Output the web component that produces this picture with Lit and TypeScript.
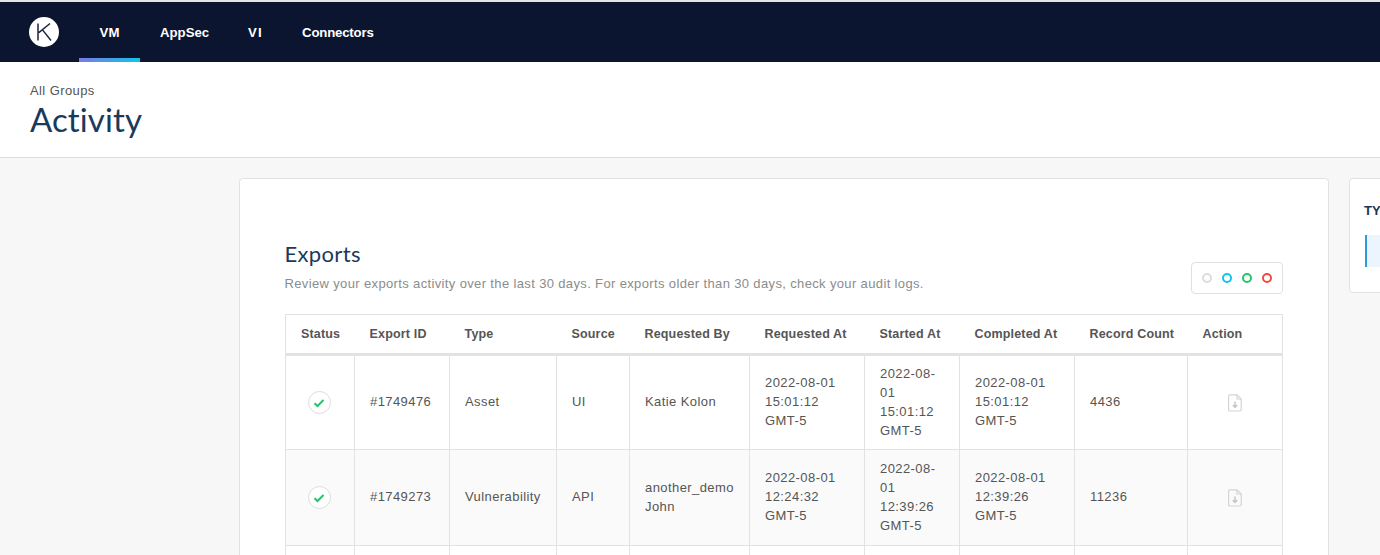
import { LitElement, html, css, svg } from "lit";
import { customElement } from "lit/decorators.js";

const check = html`<span class="ok"><svg width="12" height="10" viewBox="0 0 12 10"><path d="M1.5 5.2 4.5 8 10.5 2" fill="none" stroke="#22c56e" stroke-width="2"/></svg></span>`;
const fileIcon = html`<svg class="file" width="14" height="18" viewBox="0 0 14 18" fill="none" stroke="#d4d4d4" stroke-width="1.2"><path d="M1.8.8H9L13.2 5V15.6a1.4 1.4 0 0 1-1.4 1.4H1.8A1.4 1.4 0 0 1 .6 15.6V2.2A1.4 1.4 0 0 1 1.8.8Z"/><path d="M9 1V5H13"/><path d="M7 7.5V13M4.8 11 7 13.4 9.2 11" stroke="#c4c4c4" stroke-width="1.4"/></svg>`;

const columns = [
  ["Status", 69], ["Export ID", 95], ["Type", 107], ["Source", 73], ["Requested By", 120],
  ["Requested At", 115], ["Started At", 95], ["Completed At", 115], ["Record Count", 113], ["Action", 95],
] as const;

const rows = [
  { id: "#1749476", type: "Asset", source: "UI", by: ["Katie Kolon"], req: "15:01:12", start: "15:01:12", done: "15:01:12", count: "4436" },
  { id: "#1749273", type: "Vulnerability", source: "API", by: ["another_demo", "John"], req: "12:24:32", start: "12:39:26", done: "12:39:26", count: "11236" },
];

@customElement("app-root")
export class AppRoot extends LitElement {
  static styles = css`
    :host { display: block; width: 1380px; height: 555px; overflow: hidden; background: #f7f7f7; font-family: "Liberation Sans", Arial, sans-serif; color: #555; }
    * { box-sizing: border-box; }
    .top { height: 62px; border-top: 2px solid #e4e4e4; background: #0b1530; display: flex; padding-left: 29px; }
    .logo { width: 30px; height: 30px; margin: 15px 20px 0 0; border-radius: 50%; background: #fff; display: flex; align-items: center; justify-content: center; }
    .tab { height: 60px; padding: 0 20px; display: flex; align-items: center; justify-content: center; color: #fff; font-size: 13.2px; font-weight: 700; position: relative; }
    .tab.active { width: 61px; padding: 0; }
    .tab.wide { margin-left: -1px; letter-spacing: 1px; }
    .tab:last-child { margin-left: -.5px; letter-spacing: -.18px; }
    .tab.active::after { content: ""; position: absolute; left: 0; right: 0; bottom: 0; height: 4px; background: linear-gradient(90deg, #7b78e6, #0fc6e6); }
    .head { height: 96px; background: #fff; border-bottom: 1px solid #ddd; padding: 21px 30px 0; }
    .crumb { font-size: 13px; line-height: 16px; color: #555; letter-spacing: .4px; }
    h1 { margin: -1px 0 0; font: 400 33px/42px Lato, sans-serif; color: #1a3a5c; letter-spacing: .1px; }
    main { display: flex; gap: 20px; padding: 20px 0 0 239px; width: 1700px; align-items: flex-start; }
    .card { background: #fff; border: 1px solid #e2e2e2; border-radius: 4px; }
    .exports { width: 1090px; padding: 61px 45px 0; height: 500px; }
    .intro { display: flex; justify-content: space-between; align-items: flex-end; margin-bottom: 20px; }
    h2 { margin: 0 0 7px -.5px; font: 400 22px/28px Lato, sans-serif; color: #1a3a5c; letter-spacing: .35px; }
    .sub { margin: 0 0 1px -.5px; font-size: 13px; line-height: 18px; color: #8c8c8c; letter-spacing: .36px; }
    .legend { width: 92px; height: 32px; border: 1px solid #e0e0e0; border-radius: 4px; display: flex; align-items: center; gap: 10px; padding-left: 10px; }
    .dot { width: 10px; height: 10px; border-radius: 50%; border: 2px solid; }
    table { width: 997px; border-collapse: collapse; table-layout: fixed; font-size: 13px; letter-spacing: .42px; line-height: 19px; }
    th, td { border: 1px solid #e2e2e2; text-align: left; padding: 0 15px; vertical-align: middle; font-weight: 400; }
    th { height: 40px; padding-right: 0; font-weight: 700; font-size: 12.5px; letter-spacing: .17px; border-bottom: 3px solid #e2e2e2; border-left: 0; border-right: 0; white-space: nowrap; }
    th:first-child { border-left: 1px solid #e2e2e2; }
    th:last-child { border-right: 1px solid #e2e2e2; }
    td { height: 95px; padding-bottom: 2px; }
    tbody tr:nth-child(even) td { height: 96px; background: #fafafa; }
    td.center { text-align: center; padding: 0; }
    .ok { display: inline-flex; width: 23px; height: 23px; border: 1px solid #ddd; border-radius: 50%; background: #fff; align-items: center; justify-content: center; vertical-align: middle; margin: 0 2px 0 0; }
    .file { vertical-align: middle; margin-top: 0; }
    .side { width: 260px; height: 115px; padding: 24px 15px 0; }
    .side h3 { margin: 0 0 16px -1px; font-size: 13px; line-height: 16px; color: #1a3556; font-weight: 700; }
    .side-item { height: 32px; margin-right: -15px; background: #ecf5fd; border-left: 2px solid #2a9bdc; }
  `;

  render() {
    return html`
      <nav class="top">
        <div class="logo"><svg width="16" height="20" viewBox="0 0 16 20">${svg`<path d="M2 1.5V18.5M14 1.5 2.8 10.6M6.3 7.6 15 18.5" fill="none" stroke="#1c2440" stroke-width="1.5"/>`}</svg></div>
        <div class="tab active">VM</div><div class="tab">AppSec</div><div class="tab wide">VI</div><div class="tab">Connectors</div>
      </nav>
      <header class="head"><div class="crumb">All Groups</div><h1>Activity</h1></header>
      <main>
        <section class="card exports">
          <div class="intro">
            <div><h2>Exports</h2><p class="sub">Review your exports activity over the last 30 days. For exports older than 30 days, check your audit logs.</p></div>
            <div class="legend">${["#dcdcdc", "#0fc6e6", "#22c56e", "#f04b3f"].map((c) => html`<span class="dot" style="border-color:${c}"></span>`)}</div>
          </div>
          <table>
            <colgroup>${columns.map(([, w]) => html`<col style="width:${w}px" />`)}</colgroup>
            <thead><tr>${columns.map(([n]) => html`<th>${n}</th>`)}</tr></thead>
            <tbody>
              ${rows.map((r) => html`<tr>
                <td class="center">${check}</td><td>${r.id}</td><td>${r.type}</td><td>${r.source}</td>
                <td>${r.by.map((b) => html`${b}<br />`)}</td>
                <td>2022-08-01<br />${r.req}<br />GMT-5</td>
                <td>2022-08-01<br />${r.start}<br />GMT-5</td>
                <td>2022-08-01<br />${r.done}<br />GMT-5</td>
                <td>${r.count}</td><td class="center">${fileIcon}</td>
              </tr>`)}
              <tr>${columns.map(() => html`<td></td>`)}</tr>
            </tbody>
          </table>
        </section>
        <aside class="card side"><h3>TYPE</h3><div class="side-item"></div></aside>
      </main>`;
  }
}
